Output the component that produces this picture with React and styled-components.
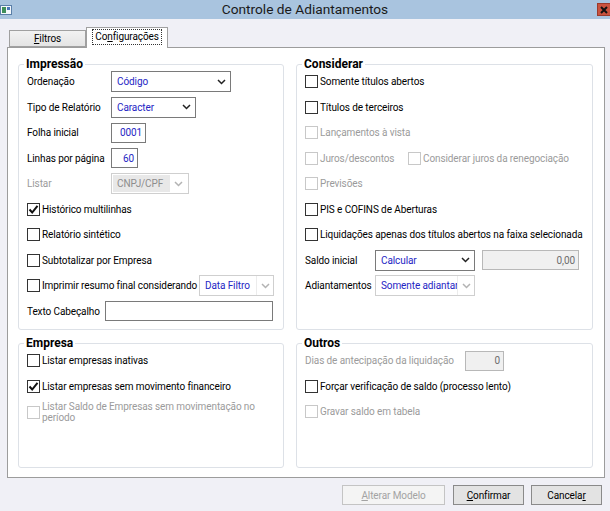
import React from 'react';
import styled, { createGlobalStyle } from 'styled-components';

const Global = createGlobalStyle`
  html, body { margin: 0; padding: 0; background: #f0f0f6; }
  body { font-family: Roboto, "Liberation Sans", sans-serif; font-size: 10px; letter-spacing: -0.1px; color: #000; }
  * { box-sizing: border-box; }
`;

const Window = styled.div`
  width: 610px;
  height: 511px;
  display: flex;
  flex-direction: column;
  background: #f0f0f6;
  overflow: hidden;
`;

const TitleBar = styled.div`
  height: 19px;
  flex: none;
  display: grid;
  grid-template-columns: 1fr auto 1fr;
  align-items: center;
  background: #a9c4df;
`;

const TitleText = styled.div`
  font-size: 13.7px;
  letter-spacing: 0;
  color: #1a1a1a;
  line-height: 19px;
`;

const CloseButton = styled.div`
  justify-self: end;
  width: 13px;
  height: 13px;
  display: flex;
  align-items: center;
  justify-content: center;
  background: #c9533f;
  border: 1px solid #9c3a2c;
  border-right: none;
`;

const TabStrip = styled.div`
  display: flex;
  align-items: flex-end;
  height: 28px;
  padding-left: 9px;
  position: relative;
  z-index: 1;
`;

const Tab = styled.div`
  height: ${p => (p.$active ? '21px' : '17px')};
  width: ${p => p.$w}px;
  margin-bottom: ${p => (p.$active ? '-1px' : '0')};
  border: 1px solid #a0a0a0;
  border-bottom: ${p => (p.$active ? 'none' : '1px solid #a0a0a0')};
  background: ${p => (p.$active ? '#ffffff' : 'linear-gradient(#f2f2f2, #e4e4e4)')};
  display: flex;
  align-items: ${p => (p.$active ? 'flex-start' : 'center')};
  justify-content: center;
  padding-top: ${p => (p.$active ? '2px' : '0')};
`;

const FocusLabel = styled.span`
  outline: 1px dotted #333;
  padding: 1px 2px;
  line-height: 12px;
`;

const Panel = styled.div`
  margin-left: 7px;
  width: 598px;
  height: 431px;
  background: #fff;
  border: 1px solid #9c9c9c;
  display: grid;
  grid-template-columns: 266px 297px;
  grid-template-rows: 273px 132px;
  column-gap: 12px;
  row-gap: 6px;
  padding: 9px 0 0 10px;
`;

const Group = styled.fieldset`
  margin: 0;
  padding: 0 8px;
  border: 1px solid #dde1e7;
  border-radius: 3px;
  min-inline-size: 0;
  display: flex;
  flex-direction: column;
  align-items: stretch;
`;

const Legend = styled.legend`
  font-weight: bold;
  font-size: 12px;
  letter-spacing: 0;
  line-height: 14px;
  padding: 0 2px;
  margin-left: -3px;
  margin-bottom: -2px;
`;

const Row = styled.div`
  height: ${p => p.$h || 25.5}px;
  display: flex;
  align-items: center;
  justify-content: flex-start;
`;

const FieldLabel = styled.span`
  display: block;
  width: ${p => (p.$w ? `${p.$w}px` : 'auto')};
  flex: none;
  text-align: left;
  color: ${p => (p.$disabled ? '#9b9b9b' : '#000')};
  white-space: nowrap;
`;

const SelectBox = styled.div`
  width: ${p => p.$w}px;
  height: 21px;
  flex: none;
  display: flex;
  align-items: center;
  background: #fff;
  border: 1px solid ${p => (p.$variant === 'dark' ? '#7a7a7a' : '#cfcfcf')};
  padding: ${p => (p.$variant === 'disabled' ? '1px' : '0 0 0 5px')};
`;

const SelectText = styled.span`
  flex: 1;
  white-space: nowrap;
  overflow: hidden;
  color: ${p => (p.$disabled ? '#8d8d8d' : '#2525c4')};
  background: ${p => (p.$disabled ? '#e8e8e8' : 'transparent')};
  height: ${p => (p.$disabled ? '17px' : 'auto')};
  line-height: ${p => (p.$disabled ? '17px' : 'normal')};
  padding-left: ${p => (p.$disabled ? '4px' : '0')};
`;

const ArrowZone = styled.span`
  width: ${p => p.$w || 16}px;
  align-self: stretch;
  flex: none;
  display: flex;
  align-items: center;
  justify-content: center;
  border-left: ${p => (p.$sep ? '1px solid #ececec' : 'none')};
`;

const TextInput = styled.div`
  width: ${p => p.$w}px;
  height: 20px;
  flex: none;
  margin-left: ${p => p.$ml || 0}px;
  border: 1px solid ${p => (p.$disabled ? '#b8b8b8' : '#7a7a7a')};
  background: ${p => (p.$disabled ? '#f0f0f0' : '#fff')};
  color: ${p => (p.$disabled ? '#6d6d6d' : '#2525c4')};
  display: flex;
  align-items: center;
  justify-content: flex-end;
  padding-right: 3px;
`;

const CheckLine = styled.label`
  display: flex;
  align-items: center;
  gap: 2px;
  width: ${p => (p.$w ? `${p.$w}px` : 'auto')};
  flex: none;
  color: ${p => (p.$disabled ? '#9b9b9b' : '#000')};
  white-space: nowrap;
  line-height: 11.5px;
`;

const Box = styled.span`
  width: 13px;
  height: 13px;
  flex: none;
  border: 1px solid ${p => (p.$disabled ? '#c8c8c8' : '#333')};
  background: #fff;
  display: flex;
  align-items: center;
  justify-content: center;
`;

const WrapText = styled.span`
  display: block;
  width: ${p => p.$w}px;
  white-space: normal;
`;

const ButtonBar = styled.div`
  display: flex;
  justify-content: flex-end;
  gap: 7px;
  padding: 7px 8px 0 0;
`;

const Button = styled.div`
  width: ${p => p.$w}px;
  height: 20px;
  display: flex;
  align-items: center;
  justify-content: center;
  border: 1px solid ${p => (p.$disabled ? '#c4c4c4' : '#8a8a8a')};
  background: ${p => (p.$disabled ? '#f4f4f4' : '#e3e3e3')};
  color: ${p => (p.$disabled ? '#a3a3a3' : '#000')};
  margin-right: ${p => p.$mr || 0}px;
`;

const U = styled.span`
  text-decoration: underline;
`;

const Chevron = ({ light }) => (
  <svg width="9" height="6" viewBox="0 0 9 6">
    <path d="M1 1 L4.5 4.5 L8 1" fill="none" stroke={light ? '#b3b3b3' : '#222'} strokeWidth="1.5" />
  </svg>
);

const Tick = () => (
  <svg width="11" height="11" viewBox="0 0 11 11">
    <path d="M1.5 5.5 L4.2 8.5 L9.5 1.8" fill="none" stroke="#111" strokeWidth="2" />
  </svg>
);

const Check = ({ checked, disabled, children, wrapWidth, w }) => (
  <CheckLine $disabled={disabled} $w={w}>
    <Box $disabled={disabled}>{checked && <Tick />}</Box>
    {wrapWidth ? <WrapText $w={wrapWidth}>{children}</WrapText> : children}
  </CheckLine>
);

const Select = ({ w, variant = 'dark', text, sep }) => (
  <SelectBox $w={w} $variant={variant}>
    <SelectText $disabled={variant === 'disabled'}>{text}</SelectText>
    <ArrowZone $w={variant === 'dark' ? 18 : 17} $sep={sep}>
      <Chevron light={variant !== 'dark'} />
    </ArrowZone>
  </SelectBox>
);

const AppIcon = () => (
  <svg width="12" height="10" viewBox="0 0 12 10" style={{ marginTop: 1 }}>
    <rect x="0.5" y="0.5" width="11" height="9" fill="#f4f8fc" stroke="#5a7fa8" />
    <rect x="2" y="2" width="4" height="6" fill="#3f8f5a" />
    <rect x="7" y="2" width="3" height="3" fill="#4a78b8" />
  </svg>
);

export default function App() {
  return (
    <>
      <Global />
      <Window>
        <TitleBar>
          <AppIcon />
          <TitleText>Controle de Adiantamentos</TitleText>
          <CloseButton>
            <svg width="8" height="8" viewBox="0 0 8 8">
              <path d="M1 1 L7 7 M7 1 L1 7" stroke="#111" strokeWidth="2" />
            </svg>
          </CloseButton>
        </TitleBar>

        <TabStrip>
          <Tab $w={77}><span><U>F</U>iltros</span></Tab>
          <Tab $w={82} $active><FocusLabel>Co<U>n</U>figurações</FocusLabel></Tab>
        </TabStrip>

        <Panel>
          <Group>
            <Legend>Impressão</Legend>
            <Row>
              <FieldLabel $w={84}>Ordenação</FieldLabel>
              <Select w={120} text="Código" />
            </Row>
            <Row>
              <FieldLabel $w={84}>Tipo de Relatório</FieldLabel>
              <Select w={85} text="Caracter" />
            </Row>
            <Row>
              <FieldLabel $w={84}>Folha inicial</FieldLabel>
              <TextInput $w={35}>0001</TextInput>
            </Row>
            <Row>
              <FieldLabel $w={84}>Linhas por página</FieldLabel>
              <TextInput $w={27}>60</TextInput>
            </Row>
            <Row>
              <FieldLabel $w={84} $disabled>Listar</FieldLabel>
              <Select w={78} variant="disabled" text="CNPJ/CPF" />
            </Row>
            <Row><Check checked>Histórico multilinhas</Check></Row>
            <Row><Check>Relatório sintético</Check></Row>
            <Row><Check>Subtotalizar por Empresa</Check></Row>
            <Row>
              <Check w={172}>Imprimir resumo final considerando</Check>
              <Select w={75} variant="light" text="Data Filtro" sep />
            </Row>
            <Row>
              <FieldLabel $w={78}>Texto Cabeçalho</FieldLabel>
              <TextInput $w={168} />
            </Row>
          </Group>

          <Group>
            <Legend>Considerar</Legend>
            <Row><Check>Somente títulos abertos</Check></Row>
            <Row><Check>Títulos de terceiros</Check></Row>
            <Row><Check disabled>Lançamentos à vista</Check></Row>
            <Row>
              <Check disabled w={103}>Juros/descontos</Check>
              <Check disabled>Considerar juros da renegociação</Check>
            </Row>
            <Row><Check disabled>Previsões</Check></Row>
            <Row><Check>PIS e COFINS de Aberturas</Check></Row>
            <Row><Check>Liquidações apenas dos títulos abertos na faixa selecionada</Check></Row>
            <Row>
              <FieldLabel $w={70}>Saldo inicial</FieldLabel>
              <Select w={100} text="Calcular" />
              <TextInput $w={97} $ml={7} $disabled>0,00</TextInput>
            </Row>
            <Row>
              <FieldLabel $w={70}>Adiantamentos</FieldLabel>
              <Select w={100} variant="light" text="Somente adiantar" sep />
            </Row>
          </Group>

          <Group>
            <Legend>Empresa</Legend>
            <Row><Check>Listar empresas inativas</Check></Row>
            <Row><Check checked>Listar empresas sem movimento financeiro</Check></Row>
            <Row $h={26}>
              <Check disabled wrapWidth={226}>Listar Saldo de Empresas sem movimentação no período</Check>
            </Row>
          </Group>

          <Group>
            <Legend>Outros</Legend>
            <Row>
              <FieldLabel $w={160} $disabled>Dias de antecipação da liquidação</FieldLabel>
              <TextInput $w={39} $disabled>0</TextInput>
            </Row>
            <Row><Check>Forçar verificação de saldo (processo lento)</Check></Row>
            <Row><Check disabled>Gravar saldo em tabela</Check></Row>
          </Group>
        </Panel>

        <ButtonBar>
          <Button $w={103} $disabled $mr={1}><span><U>A</U>lterar Modelo</span></Button>
          <Button $w={71}><span><U>C</U>onfirmar</span></Button>
          <Button $w={71}><span>Cancela<U>r</U></span></Button>
        </ButtonBar>
      </Window>
    </>
  );
}
